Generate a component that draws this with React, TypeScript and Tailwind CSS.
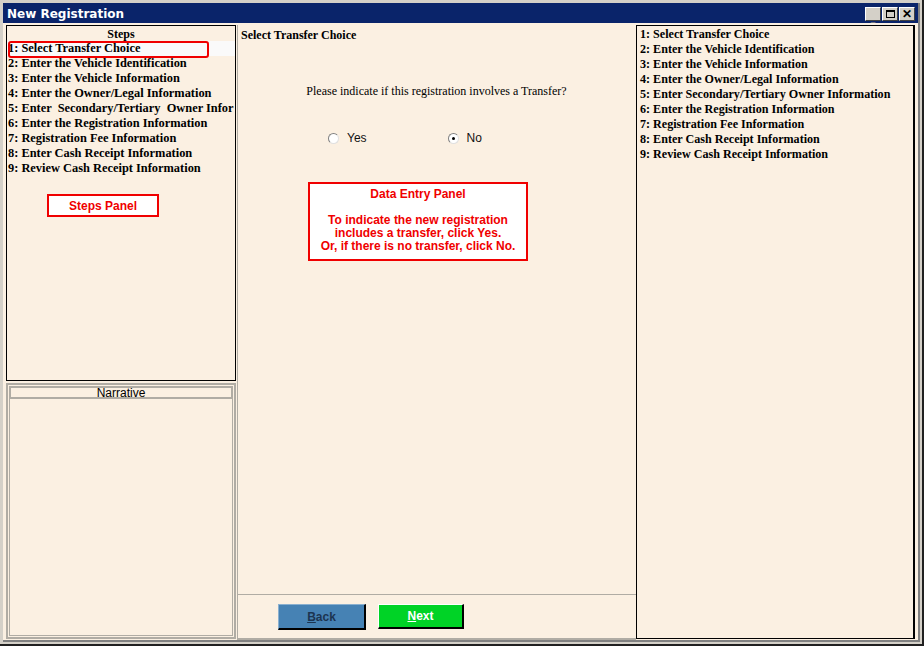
import React from 'react';

const serif = { fontFamily: '"Liberation Serif", "Times New Roman", serif' };
const sans = { fontFamily: '"Liberation Sans", Arial, sans-serif' };

const leftSteps = [
  '1: Select Transfer Choice',
  '2: Enter the Vehicle Identification',
  '3: Enter the Vehicle Information',
  '4: Enter the Owner/Legal Information',
  '5: Enter  Secondary/Tertiary  Owner Infor',
  '6: Enter the Registration Information',
  '7: Registration Fee Information',
  '8: Enter Cash Receipt Information',
  '9: Review Cash Receipt Information',
];

const rightSteps = [
  '1: Select Transfer Choice',
  '2: Enter the Vehicle Identification',
  '3: Enter the Vehicle Information',
  '4: Enter the Owner/Legal Information',
  '5: Enter Secondary/Tertiary Owner Information',
  '6: Enter the Registration Information',
  '7: Registration Fee Information',
  '8: Enter Cash Receipt Information',
  '9: Review Cash Receipt Information',
];

function TitleButton({ children }: { children: React.ReactNode }) {
  return (
    <div className="w-[16px] h-[14px] bg-[#d4d0c8] border border-t-white border-l-white border-r-[#404040] border-b-[#404040] flex items-center justify-center text-[11px] leading-none font-bold">
      {children}
    </div>
  );
}

function Radio({ checked, label }: { checked?: boolean; label: string }) {
  return (
    <div className="flex items-center gap-[8px]" style={sans}>
      <div className="w-[11px] h-[11px] rounded-full bg-white border border-t-[#808080] border-l-[#808080] border-r-[#e0e0e0] border-b-[#e0e0e0] flex items-center justify-center">
        {checked && <div className="w-[3px] h-[3px] rounded-full bg-black" />}
      </div>
      <span className="text-[12px] text-[#111]">{label}</span>
    </div>
  );
}

export default function App() {
  return (
    <div className="w-[924px] h-[646px] bg-[#d4d0c8] border-r-2 border-b-2 border-[#202020] flex flex-col overflow-hidden">
      <div className="flex-1 flex flex-col m-[3px] mb-[2px] mr-[2px] border-r-2 border-b-2 border-[#808080]">
        {/* title bar */}
        <div className="h-[20px] bg-[#0a246a] flex items-center justify-between pl-[4px] pr-[3px]">
          <span className="text-white text-[12px] font-bold mt-[2px]" style={{ fontFamily: 'Tahoma, "DejaVu Sans", sans-serif' }}>
            New Registration
          </span>
          <div className="flex gap-[1px] mt-[2px]">
            <TitleButton>
              <span className="text-[#808080] mt-[4px]">_</span>
            </TitleButton>
            <TitleButton>
              <div className="w-[9px] h-[8px] border border-black border-t-2" />
            </TitleButton>
            <TitleButton>
              <span className="text-black text-[12px]">✕</span>
            </TitleButton>
          </div>
        </div>

        {/* body */}
        <div className="flex-1 flex bg-[#fbf0e2] pl-[3px] pt-[2px]">
          {/* left column */}
          <div className="w-[230px] flex flex-col">
            <div className="h-[356px] border border-black relative pt-[1px]" style={serif}>
              <div className="text-center text-[12px] font-bold leading-[14px]">Steps</div>
              {leftSteps.map((s, i) => (
                <div
                  key={s}
                  className={`text-[12.4px] font-bold leading-[15px] pl-[1px] whitespace-pre overflow-hidden ${i === 0 ? 'bg-[#fafafa]' : ''}`}
                >
                  {s}
                </div>
              ))}
              <div className="absolute left-[1px] top-[15px] w-[201px] h-[17px] border-2 border-[#f00000] rounded-[3px]" />
              <div className="mt-[18px] ml-[40px] w-[112px] h-[23px] bg-white border-2 border-[#f00000] flex items-center justify-center text-[12px] font-bold text-[#f00000]" style={sans}>
                Steps Panel
              </div>
            </div>
            <div className="flex-1 mt-[2px] mb-[1px] border-2 border-[#b0aca4] p-[1px] flex flex-col">
              <div className="h-[13px] border-2 border-[#b0aca4] flex items-center justify-center text-[12px] text-black leading-none" style={sans}>
                Narrative
              </div>
              <div className="flex-1 border border-[#b0aca4] border-t-0" />
            </div>
          </div>

          {/* center */}
          <div className="w-[399px] flex flex-col border-l border-[#b0aca4] ml-[1px] border-b-2">
            <div className="flex-1 flex flex-col pl-[3px] pt-[3px]" style={serif}>
              <div className="text-[12px] font-bold leading-[15px]">Select Transfer Choice</div>
              <div className="mt-[41px] text-center text-[12px] leading-[15px] pr-[4px]">
                Please indicate if this registration involves a Transfer?
              </div>
              <div className="mt-[30px] flex pl-[87px] gap-[81px]">
                <Radio label="Yes" />
                <Radio checked label="No" />
              </div>
              <div
                className="mt-[35px] ml-[67px] w-[220px] h-[79px] bg-white border-2 border-[#f00000] text-[#f00000] text-[12px] font-bold text-center leading-[13px] pt-[4px]"
                style={sans}
              >
                <div>Data Entry Panel</div>
                <div className="mt-[13px]">To indicate the new registration</div>
                <div>includes a transfer, click Yes.</div>
                <div>Or, if there is no transfer, click No.</div>
              </div>
            </div>
            <div className="h-[44px] border-t border-[#b0aca4] flex items-start pt-[9px] pl-[40px] gap-[12px]" style={sans}>
              <button className="w-[88px] h-[26px] bg-[#4682b4] border border-t-[#8ab0d0] border-l-[#8ab0d0] border-r-2 border-b-2 border-r-black border-b-black text-[12px] font-bold text-[#1c3450]">
                <span className="underline">B</span>ack
              </button>
              <button className="w-[86px] h-[25px] bg-[#00d326] border border-t-white border-l-white border-r-2 border-b-2 border-r-black border-b-black text-[12px] font-bold text-white">
                <span className="underline">N</span>ext
              </button>
            </div>
          </div>

          {/* right */}
          <div className="flex-1 border border-black border-r-2 mb-[1px] mr-[3px] pl-[3px] pt-[1px]" style={serif}>
            {rightSteps.map((s) => (
              <div key={s} className="text-[12.1px] font-bold leading-[15px] whitespace-nowrap">
                {s}
              </div>
            ))}
          </div>
        </div>
      </div>
    </div>
  );
}
